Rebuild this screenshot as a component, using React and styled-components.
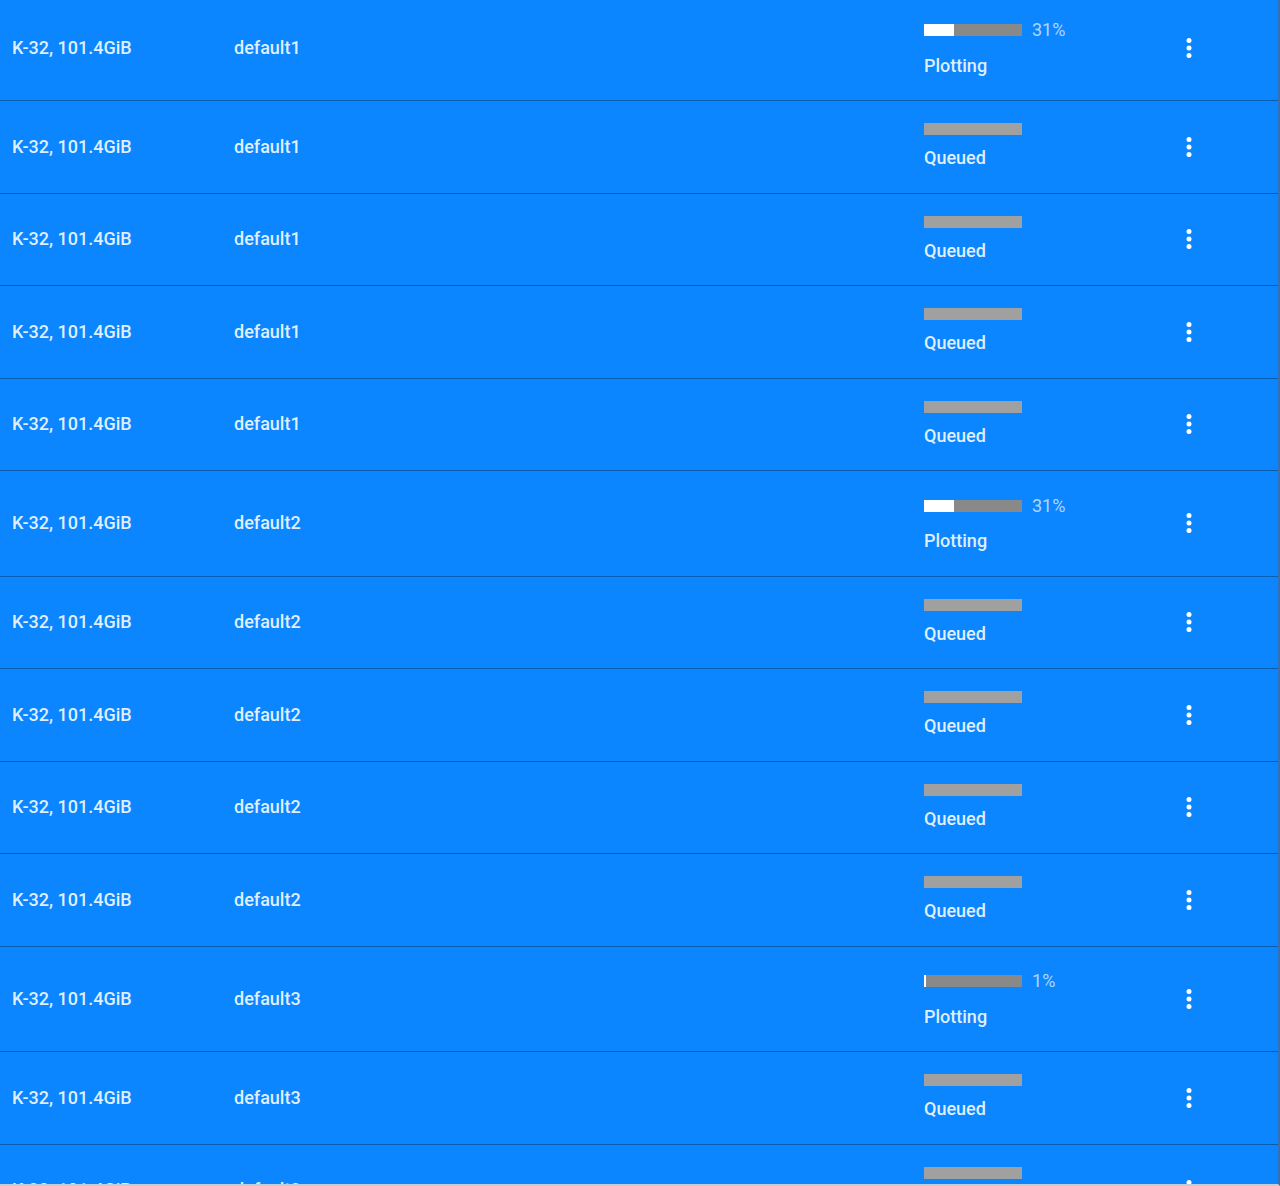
import React from "react";
import styled, { createGlobalStyle } from "styled-components";

const GlobalStyle = createGlobalStyle`
  html, body {
    margin: 0;
    padding: 0;
    background: #0b86ff;
    font-family: Roboto, "Liberation Sans", Arial, sans-serif;
  }
`;

const Frame = styled.div`
  height: 1186px;
  overflow: hidden;
  box-sizing: border-box;
  background: #0b86ff;
  border-right: 2px solid #3570b4;
  border-bottom: 2px solid #c4ccd6;
`;

const Table = styled.div`
  margin-top: -4.5px;
`;

const Row = styled.div`
  display: grid;
  grid-template-columns: 222px 690px 250px 30px 1fr;
  align-items: center;
  padding: 22px 0 22.5px 12px;
  border-bottom: 1px solid rgba(0, 0, 0, 0.3);
  color: rgba(255, 255, 255, 0.88);
  font-size: 18px;
  font-weight: 500;
  line-height: 24px;
`;

const Cell = styled.div`
  white-space: nowrap;
`;

const Status = styled.div`
  display: flex;
  flex-direction: column;
  gap: 11px;
`;

const BarLine = styled.div`
  display: flex;
  align-items: center;
  gap: 10px;
  height: ${(p) => (p.$labelled ? "25px" : "12px")};
`;

const Track = styled.div`
  width: 98px;
  height: 12px;
  background: ${(p) => (p.$queued ? "#a0a0a0" : "#898989")};
  display: flex;
`;

const Fill = styled.div`
  height: 100%;
  background: #ffffff;
`;

const Percent = styled.span`
  color: rgba(255, 255, 255, 0.68);
  font-size: 18px;
  font-weight: 400;
`;

const MoreButton = styled.div`
  width: 30px;
  height: 30px;
  display: flex;
  align-items: center;
  justify-content: center;
  color: #ffffff;
`;

const MoreVert = () => (
  <svg width="30" height="30" viewBox="0 0 24 24" fill="currentColor">
    <circle cx="12" cy="6" r="2" />
    <circle cx="12" cy="12" r="2" />
    <circle cx="12" cy="18" r="2" />
  </svg>
);

const plots = [
  { queue: "default1", progress: 31 },
  { queue: "default1" },
  { queue: "default1" },
  { queue: "default1" },
  { queue: "default1" },
  { queue: "default2", progress: 31 },
  { queue: "default2" },
  { queue: "default2" },
  { queue: "default2" },
  { queue: "default2" },
  { queue: "default3", progress: 1 },
  { queue: "default3" },
  { queue: "default3" },
];

function PlotRow({ queue, progress }) {
  const plotting = progress !== undefined;
  return (
    <Row>
      <Cell>K-32, 101.4GiB</Cell>
      <Cell>{queue}</Cell>
      <Status>
        <BarLine $labelled={plotting}>
          <Track $queued={!plotting}>
            {plotting && (
              <Fill style={{ width: `${Math.max(progress, 2)}%` }} />
            )}
          </Track>
          {plotting && <Percent>{progress}%</Percent>}
        </BarLine>
        <Cell>{plotting ? "Plotting" : "Queued"}</Cell>
      </Status>
      <MoreButton>
        <MoreVert />
      </MoreButton>
    </Row>
  );
}

export default function App() {
  return (
    <>
      <GlobalStyle />
      <Frame>
        <Table>
          {plots.map((plot, index) => (
            <PlotRow key={index} {...plot} />
          ))}
        </Table>
      </Frame>
    </>
  );
}
